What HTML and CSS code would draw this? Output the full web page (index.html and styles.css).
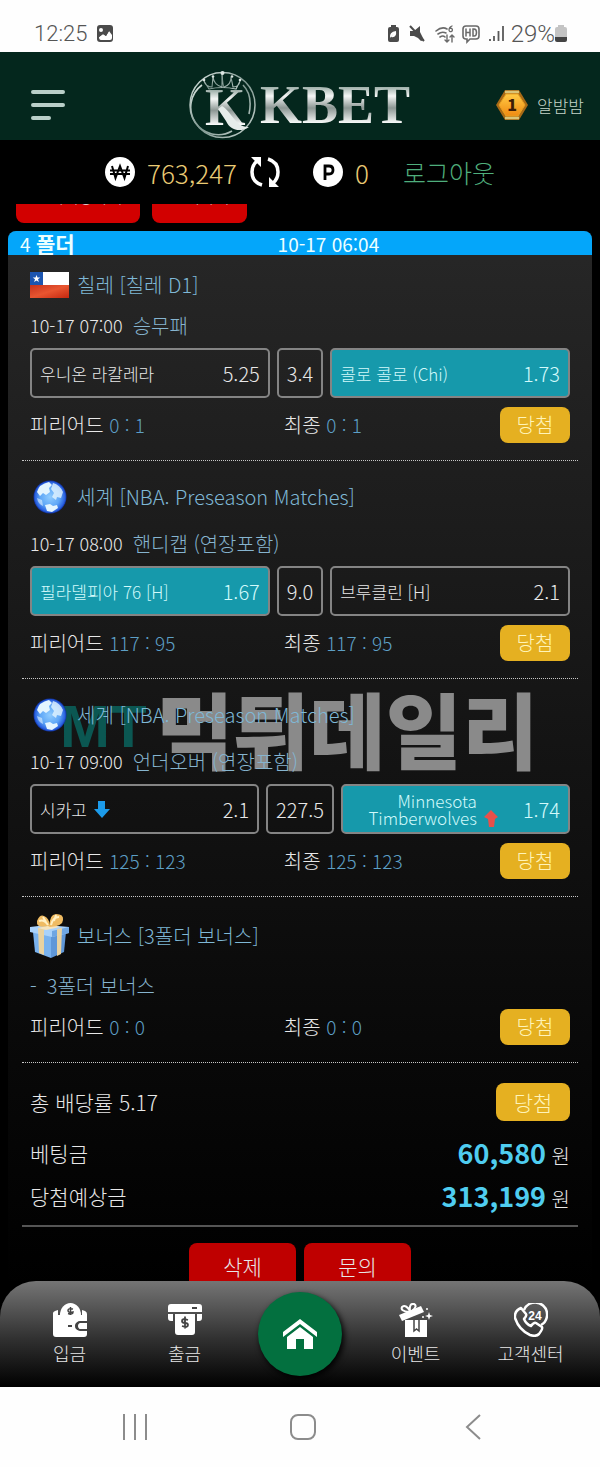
FILE: index.html
```html
<!DOCTYPE html>
<html lang="ko">
<head>
<meta charset="utf-8">
<meta name="viewport" content="width=device-width, initial-scale=1">
<title>KBET</title>
<link rel="stylesheet" href="styles.css">
</head>
<body>
<div class="app">
  <div class="status">
    <span class="status-text">12:25</span>
    <svg class="status-photo" width="18" height="18" viewBox="0 0 18 18"><rect x="1" y="0" width="16" height="17" rx="3" fill="#4b4b4b"/><circle cx="5" cy="5" r="2" fill="#fff"/><path d="M3 12l4-3 3 2 3-5 3 4v3q0 2-2 2H5q-2 0-2-3z" fill="#fff"/><path d="M3 9l3-2 3 2 3-4 1 1-3 5-3-2-4 3z" fill="#4b4b4b"/></svg>
    <svg class="status-icons" width="118" height="22" viewBox="0 0 118 22">
      <g fill="#4b4b4b">
        <path d="M4 4V2h5v2h1q2 0 2 2v11q0 2-2 2H3q-2 0-2-2V6q0-2 2-2z"/>
        <path d="M3 15q-1-6 6-7 1 7-5 6l3-4z" fill="#fff"/>
        <path d="M23 8h4l6-5v6l4 8-3 1-3-3-4-2h-4z"/>
      </g>
      <path d="M23 3l14 15" stroke="#4b4b4b" stroke-width="2"/>
      <g fill="none" stroke="#6a6a6a" stroke-width="1.600" stroke-linecap="round">
        <path d="M49 8q6-5 11-2M51 11q4-3 8-1M53 14q3-2 5 0"/>
        <path d="M60 12v7m-2-2l2 2 2-2M65 19v-7m-2 2l2-2 2 2" stroke-width="1.400"/>
        <path d="M65 3q-3 1-3 4a1.700 1.700 0 1 0 1-1.600" stroke-width="1.300"/>
        <path d="M79 3h10q3 0 3 3v7q0 3-3 3h-6l-3 3v-3h-1q-3 0-3-3V6q0-3 3-3z"/>
        <path d="M79 6v7M79 9.500h4M83 6v7M86 6v7h1q2.500 0 2.500-3.500T87 6z" stroke-width="1.500"/>
      </g>
      <path d="M103 18v-2M107 18v-5M111.500 18V8M116 18V3" stroke="#5a5a5a" stroke-width="1.800"/>
    </svg>
    <span class="status-text level">29%</span>
    <svg width="12" height="18" viewBox="0 0 12 18"><path d="M3 2V0h6v2h1q2 0 2 2v9H0V4q0-2 2-2z" fill="#c4c4c4"/><path d="M0 12h12v3q0 2-2 2H2q-2 0-2-2z" fill="#444"/></svg>
  </div>

  <header class="header">
    <button class="menu" aria-label="메뉴"><svg width="34" height="30" viewBox="0 0 34 30"><path d="M2 2h30M2 15h30M2 28h16" stroke="#b9cfc8" stroke-width="4" stroke-linecap="round"/></svg></button>
    <svg class="logo" width="222" height="70" viewBox="0 0 222 70" role="img" aria-label="KBET">
      <defs>
        <linearGradient id="steel" x1="0" y1="0" x2="0" y2="1"><stop offset=".2" stop-color="#9fb0aa"/><stop offset=".35" stop-color="#f4f6f5"/><stop offset=".55" stop-color="#8b9693"/><stop offset=".8" stop-color="#f8faf9"/></linearGradient>
        <linearGradient id="ring" x1="0" y1="0" x2="1" y2="1"><stop offset="0" stop-color="#dce6e2"/><stop offset=".5" stop-color="#7f9790"/><stop offset="1" stop-color="#c9d6d1"/></linearGradient>
      </defs>
      <g fill="none" stroke="url(#ring)">
        <circle cx="33.500" cy="35" r="32.500" stroke-width="1.500"/>
        <path d="M13 15a27.500 27.500 0 0 0 30 46M54 15q10 10 6 29" stroke-width="1.600"/>
        <path d="M20 19L15 11q2 6 8 6l1-10q1 8 9 10V3q1 14 2 14 7-2 7-10l2 10q6 0 7-6l-4 8q-14-3-27 0z" stroke-width="1.100"/>
      </g>
      <g fill="#dce6e2"><circle cx="15" cy="10" r="1.300"/><circle cx="24" cy="6.500" r="1.300"/><circle cx="33.500" cy="3" r="2"/><circle cx="43" cy="6.500" r="1.300"/><circle cx="51" cy="10" r="1.300"/></g>
      <text class="logo-k" x="16" y="55" fill="url(#steel)">K</text>
      <path d="M33 36c9 5 14 22 27 21-9 6-19 3-23-6l-8-12z" fill="#e6ecea"/>
      <text class="logo-word" x="71" y="53" fill="url(#steel)">KBET</text>
    </svg>
    <div class="user">
      <svg width="34" height="32" viewBox="0 0 34 32"><defs><linearGradient id="gold" x1="0" y1="0" x2="0" y2="1"><stop offset="0" stop-color="#ffcb45"/><stop offset="1" stop-color="#f08a12"/></linearGradient></defs><path d="M10 1h14l9 15-9 15H10L1 16z" fill="#a96a16"/><path d="M10 3h14M10 29h14" stroke="#d9c477" stroke-width="2.500"/><path d="M11 5h12l7 11-7 11H11L4 16z" fill="url(#gold)" stroke="#e8a020"/><text class="rank" x="17" y="22" text-anchor="middle">1</text></svg>
      <span>알밤밤</span>
    </div>
  </header>

  <div class="balance">
    <svg width="30" height="30" viewBox="0 0 30 30"><circle cx="15" cy="15" r="15" fill="#fff"/><path d="M7 9l3.500 12L15 9l4.500 12L23 9M5 13.500h20M5 17h20" fill="none" stroke="#000" stroke-width="2"/></svg>
    <span class="money">763,247</span>
    <button class="refresh" aria-label="새로고침"><svg width="32" height="32" viewBox="0 0 32 32"><path d="M13 29Q3 26 3 16 3 9 8 5M19 3q10 3 10 13 0 7-5 11" fill="none" stroke="#fff" stroke-width="3.500"/><path d="M2 1h10v10zM30 31H20V21z" fill="#fff"/></svg></button>
    <svg class="point" width="30" height="30" viewBox="0 0 30 30"><circle cx="15" cy="15" r="15" fill="#fff"/><path d="M12 23V9h4q4 0 4 4t-4 4h-4" fill="none" stroke="#000" stroke-width="2.800"/></svg>
    <span class="money">0</span>
    <a class="logout" href="#">로그아웃</a>
  </div>

  <main class="content">
    <div class="bulk"><button class="bulk-btn">전체베팅삭제</button><button class="bulk-btn">선택삭제</button></div>

    <section class="slip">
      <h2 class="slip-head"><span>4 <b>폴더</b></span><time>10-17 06:04</time></h2>

      <article class="event">
        <h3 class="league"><svg width="39" height="26" viewBox="0 0 39 26"><defs><linearGradient id="red" x1="0" y1="0" x2="1" y2="1"><stop offset="0" stop-color="#c8321c"/><stop offset=".5" stop-color="#e85530"/><stop offset="1" stop-color="#c4270f"/></linearGradient></defs><path d="M0 0h39v13H0z" fill="#fff"/><path d="M0 13h39v13H0z" fill="url(#red)"/><path d="M0 0h13v13H0z" fill="#1c55b0"/><path d="M6.500 3l1 2.600h2.800L8 7.300l.9 2.700-2.400-1.600L4.100 10 5 7.300 2.700 5.600h2.800z" fill="#fff"/></svg>칠레 [칠레 D1]</h3>
        <p class="market"><time>10-17 07:00</time><span>승무패</span></p>
        <div class="odds">
          <button class="pick"><span>우니온 라칼레라</span><span class="rate">5.25</span></button>
          <button class="pick line"><span class="rate">3.4</span></button>
          <button class="pick on"><span>콜로 콜로 (Chi)</span><span class="rate">1.73</span></button>
        </div>
        <div class="result"><span>피리어드 <em>0 : 1</em></span><span>최종 <em>0 : 1</em></span><span class="win">당첨</span></div>
      </article>

      <article class="event">
        <h3 class="league"><svg width="39" height="38" viewBox="0 0 39 38"><defs><radialGradient id="sea" cx=".5" cy=".5" r=".5"><stop offset="0" stop-color="#8fccff"/><stop offset=".6" stop-color="#5ea6f6"/><stop offset=".9" stop-color="#2a62e0"/><stop offset="1" stop-color="#0f2fa0"/></radialGradient><symbol id="globe" viewBox="0 0 39 38"><circle cx="20" cy="19" r="16.500" fill="url(#sea)"/><g fill="#e4f5ff"><path d="M7 14q2-8 12-10l3 3-3 3 1 4-4 3-3-2-3 3z"/><path d="M23 5q7 2 10 9l-2 6-4-1-1 3-4-3 2-4-3-4z" opacity=".8"/><path d="M15 27l5-1 3 2 4-1 1 3-6 4-5-1z"/><path d="M7 20l5 2 1 6q-5-2-6-8z" opacity=".6"/></g></symbol></defs><use href="#globe"/></svg>세계 [NBA. Preseason Matches]</h3>
        <p class="market"><time>10-17 08:00</time><span>핸디캡 (연장포함)</span></p>
        <div class="odds">
          <button class="pick on"><span>필라델피아 76 [H]</span><span class="rate">1.67</span></button>
          <button class="pick line"><span class="rate">9.0</span></button>
          <button class="pick"><span>브루클린 [H]</span><span class="rate">2.1</span></button>
        </div>
        <div class="result"><span>피리어드 <em>117 : 95</em></span><span>최종 <em>117 : 95</em></span><span class="win">당첨</span></div>
      </article>

      <article class="event marked">
        <div class="watermark"><span class="mark-mt">MT</span><span>먹튀데일리</span></div>
        <h3 class="league"><svg width="39" height="38"><use href="#globe"/></svg>세계 [NBA. Preseason Matches]</h3>
        <p class="market"><time>10-17 09:00</time><span>언더오버 (연장포함)</span></p>
        <div class="odds">
          <button class="pick"><span>시카고</span><svg width="16" height="17" viewBox="0 0 16 17"><path d="M4 0h7v8h5l-8 9-8-9h4z" fill="#1c9bea"/></svg><span class="rate">2.1</span></button>
          <button class="pick line"><span class="rate">227.5</span></button>
          <button class="pick on away"><span class="two">Minnesota<br>Timberwolves</span><svg class="up" width="14" height="17" viewBox="0 0 14 17"><path d="M7 0l7 7-3 2-1 8H5L4 9 0 7z" fill="#e8504a"/></svg><span class="rate">1.74</span></button>
        </div>
        <div class="result"><span>피리어드 <em>125 : 123</em></span><span>최종 <em>125 : 123</em></span><span class="win">당첨</span></div>
      </article>

      <article class="event bonus">
        <h3 class="league"><svg width="39" height="44" viewBox="0 0 39 44"><path d="M3 18l18 3v23L5 38z" fill="#79b2ee"/><path d="M21 21l15-3-2 20-13 6z" fill="#5f97d8"/><path d="M0 13l17-2 22 2v6l-17 4L0 18z" fill="#a9d2fb"/><path d="M22 17l17-4v6l-17 4z" fill="#6fa6e2"/><path d="M8 14l6 1v26l-5-2zM27 15l5-1-1 26-4 2z" fill="#e9d2a0"/><path d="M8 14l13-3 9 2-14 3z" fill="#f6e4bd"/><path d="M18 12Q6 15 7 7q3-7 7-5 5 2 6 9Q19 1 26 0q8 0 7 6 0 6-13 7z" fill="#efbb62"/><path d="M18 11q-4-6-9-4M21 11q2-8 8-8M13 3l3 5M26 1l-2 6" stroke="#fff0c4" stroke-width="2" fill="none"/></svg>보너스 [3폴더 보너스]</h3>
        <p class="market"><span>-</span><span>3폴더 보너스</span></p>
        <div class="result"><span>피리어드 <em>0 : 0</em></span><span>최종 <em>0 : 0</em></span><span class="win">당첨</span></div>
      </article>

      <div class="totals">
        <div class="total first"><span>총 배당률 5.17</span><span class="win big">당첨</span></div>
        <div class="total"><span>베팅금</span><span class="won"><strong>60,580</strong> 원</span></div>
        <div class="total"><span>당첨예상금</span><span class="won"><strong>313,199</strong> 원</span></div>
      </div>
      <div class="actions"><button class="action">삭제</button><button class="action">문의</button></div>
    </section>
  </main>

  <nav class="tabs">
    <a class="tab" href="#"><svg width="34" height="34" viewBox="0 0 34 34"><path d="M2 8l3-1v5h2a10.500 10.500 0 0 1 20 0h2V7l3 1q2 1 2 3v8h-8q-4 0-4 4t4 4h8v4q0 3-3 3H3q-3 0-3-3V10q0-1 2-2z" fill="#fff"/><path d="M7 12a10.500 12 0 0 1 21 0z" fill="#fff"/><path d="M34 20h-7q-2 0-2 3t2 3h7z" fill="#fff"/><path d="M34 19h-7q-3 0-3 4t3 4h7M15 23h4" stroke="#444" stroke-width="1.800" fill="none"/><path d="M20 6q-5-1-5 1.500T20 9q0 3-5 1.500M17.500 4v8" stroke="#444" stroke-width="1.500" fill="none"/></svg>입금</a>
    <a class="tab" href="#"><svg width="34" height="34" viewBox="0 0 34 34"><path d="M0 9V4q0-3 3-3h28q3 0 3 3v5zM0 11h5v7H3q-3 0-3-3zM34 11h-5v7h2q3 0 3-3zM7 11h20v18q0 3-3 3H10q-3 0-3-3z" fill="#fff"/><path d="M24 5h5" stroke="#444" stroke-width="2"/><path d="M20 17q-6-2-6 1 0 2 3 2t3 2q0 3-6 1M17 13.500v12" stroke="#444" stroke-width="1.800" fill="none"/></svg>출금</a>
    <a class="home" href="#" aria-label="홈"><svg width="36" height="32" viewBox="0 0 36 32"><path d="M1 14L18 1l17 13v5L18 6 1 19z" fill="#fff"/><path d="M5 19L18 9l13 10v12h-9V21h-8v10H5z" fill="#fff"/></svg></a>
    <a class="tab" href="#"><svg width="34" height="34" viewBox="0 0 34 34"><path d="M6 17h22v17H6z" fill="#fff"/><path d="M15 17v11l2.500-2 2.500 2V17" fill="none" stroke="#444" stroke-width="1.500"/><path d="M0 12L22 3l3 6L3 18z" fill="#fff"/><path d="M10 9Q1 8 3 4q4-3 8 4-1-8 4-7 4 2-2 7" fill="none" stroke="#fff" stroke-width="2"/><path d="M30 9l1 3 3 1-3 1-1 3-1-3-3-1 3-1z" fill="#fff"/><path d="M28 5v2M24 13v2" stroke="#fff" stroke-width="1.500"/></svg>이벤트</a>
    <a class="tab" href="#"><svg width="34" height="34" viewBox="0 0 34 34"><path d="M10 7a12 12 0 1 1 17 15" fill="none" stroke="#fff" stroke-width="2.500"/><path d="M7 5l5 6q1 2-2 5 2 5 7 7 3-4 5-3l6 4q1 2-3 7-3 3-9 1Q5 27 1 15 0 8 7 5z" fill="none" stroke="#fff" stroke-width="2.500" stroke-linejoin="round"/><text class="day" x="21" y="17" text-anchor="middle">24</text></svg>고객센터</a>
  </nav>
  <div class="system">
    <button aria-label="최근 앱"><svg width="26" height="26" viewBox="0 0 26 26"><path d="M2 0v26M13 0v26M24 0v26" stroke="#8c8c8c" stroke-width="2"/></svg></button>
    <button aria-label="홈 화면"><svg width="26" height="26" viewBox="0 0 26 26"><rect x="1" y="1" width="24" height="24" rx="7" fill="none" stroke="#8c8c8c" stroke-width="2"/></svg></button>
    <button aria-label="뒤로"><svg width="26" height="26" viewBox="0 0 26 26"><path d="M22 1L9 13l13 12" fill="none" stroke="#8c8c8c" stroke-width="2"/></svg></button>
  </div>
</div>
</body>
</html>
```

FILE: styles.css
```css
* { box-sizing: border-box; }
body { margin: 0; background: #000; color: #e8e8e8; font-family: "Noto Sans CJK KR", sans-serif; font-weight: 300; }
button { margin: 0; padding: 0; border: 0; background: none; font: inherit; color: inherit; }
a { color: inherit; text-decoration: none; }
h2, h3, p { margin: 0; font-weight: 300; }
em { font-style: normal; }
svg { display: block; flex: none; }

.app { display: flex; flex-direction: column; height: 100vh; }

.status { display: flex; align-items: center; height: 52px; padding: 16px 33px 0 34px; background: #fefefe; color: #555; flex: none; }
.status-text { font-family: Roboto, sans-serif; font-size: 22px; font-weight: 300; line-height: 24px; }
.status-text.level { font-size: 24px; }
.status-photo { margin-left: 9px; }
.status-icons { margin: 0 6px 0 auto; }

.header { display: grid; grid-template-columns: 1fr auto 1fr; align-items: center; height: 88px; padding: 18px 16px 0; background: #04271d; flex: none; }
.menu { justify-self: start; margin-left: 15px; }
.logo-k, .logo-word { font-family: "Liberation Serif", serif; font-weight: 700; }
.logo-k { font-size: 52px; }
.logo-word { font-size: 54px; }
.user { display: flex; align-items: center; justify-content: flex-end; gap: 8px; font-size: 17px; color: #c5d5c8; }
.rank { font-size: 16px; font-weight: 900; fill: #3d1c05; }

.balance { display: flex; align-items: center; justify-content: center; gap: 12px; height: 64px; font-size: 25px; flex: none; }
.money { color: #eacb74; font-size: 26px; }
.point { margin-left: 20px; }
.logout { margin-left: 22px; color: #4fae7c; }

.content { flex: 1; min-height: 0; padding: 0 8px; overflow: hidden auto; scrollbar-width: none; }
.bulk { display: flex; align-items: flex-end; gap: 12px; height: 19px; margin-bottom: 8px; padding-left: 8px; overflow: hidden; }
.bulk-btn { height: 54px; padding: 0 18px; border-radius: 8px; background: #d20000; font-size: 16px; }

.slip { border-radius: 8px 8px 0 0; background: linear-gradient(#272727, #020202 94%, #000); overflow: hidden; }
.slip-head { display: grid; grid-template-columns: 46% 1fr; align-items: center; height: 24px; padding: 0 12px; background: #04a6fa; color: #ecffff; font-size: 19px; font-weight: 400; line-height: 24px; }
.slip-head b { font-size: 21px; font-weight: 700; }

.event { margin: 0 14px; padding: 13px 8px 16px; border-bottom: 1px dotted #c8c8c8; }
.league { display: flex; align-items: center; gap: 8px; padding: 4px 0; color: #7fb8d6; font-size: 20px; line-height: 24px; }
.market { display: flex; align-items: center; gap: 10px; height: 46px; color: #86b4cf; font-size: 20px; }
.market time { color: #e8e8e8; font-size: 18px; }
.odds { display: flex; gap: 7px; margin-bottom: 8px; }
.pick { display: flex; flex: 1 1 0; align-items: center; gap: 7px; height: 50px; padding: 0 8px; border: 2px solid #848484; border-radius: 5px; font-size: 17px; line-height: 17px; text-align: left; }
.pick.line { flex: none; }
.pick.on { background: #1699ab; color: #d2fafb; }
.rate { margin-left: auto; font-size: 20px; }
.two { margin-left: auto; text-align: right; }
.up { align-self: flex-end; margin-bottom: 5px; }
.away .rate { margin-left: 18px; }
.result { display: grid; grid-template-columns: 47% 1fr auto; align-items: center; font-size: 20px; line-height: 38px; }
.result em { color: #5d9fc5; font-size: 19px; }
.win { min-width: 70px; height: 36px; border-radius: 8px; background: #e5b021; color: #fff4b8; font-size: 20px; line-height: 36px; text-align: center; }
.win.big { min-width: 74px; height: 38px; font-size: 21px; line-height: 38px; }

.marked { position: relative; z-index: 0; }
.watermark { position: absolute; z-index: -1; top: 6px; left: 38px; display: flex; align-items: center; gap: 10px; color: #8a8a8a; font-size: 83px; font-weight: 900; line-height: 84px; white-space: nowrap; }
.mark-mt { color: #0b5752; font-family: "Liberation Sans", sans-serif; font-size: 60px; }

.totals { margin: 0 14px; padding: 20px 8px 8px; border-bottom: 2px solid #555; font-size: 21px; }
.total { display: flex; align-items: center; justify-content: space-between; height: 43px; }
.total.first { height: 38px; margin-bottom: 10px; }
.won { font-size: 20px; }
.won strong { color: #4fcdf0; font-size: 27px; font-weight: 700; }
.actions { display: flex; justify-content: center; gap: 8px; padding-top: 16px; }
.action { width: 107px; height: 46px; border-radius: 8px; background: #bf0000; font-size: 21px; }

.tabs { display: flex; align-items: center; height: 106px; padding: 0 12px; border-radius: 36px 36px 0 0; background: linear-gradient(#757575, #303030 55%, #000); flex: none; }
.tab { display: flex; flex: 1 1 0; flex-direction: column; align-items: center; gap: 4px; font-size: 18px; line-height: 24px; }
.home { display: grid; place-items: center; width: 84px; height: 84px; margin: 0 16px; border-radius: 50%; background: #03703f; box-shadow: 2px 3px 6px #000; }
.day { fill: #fff; font-family: "Liberation Sans", sans-serif; font-size: 12px; font-weight: 700; }

.system { display: flex; justify-content: center; align-items: center; gap: 142px; height: 80px; padding-left: 6px; background: #fefefe; flex: none; }
```
